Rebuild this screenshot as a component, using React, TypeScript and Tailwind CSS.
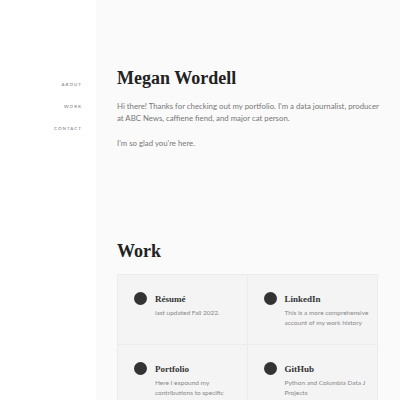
export default function App() {
  const cards = [
    { t: "Résumé", d: "last updated Fall 2022." },
    { t: "LinkedIn", d: "This is a more comprehensive account of my work history" },
    { t: "Portfolio", d: "Here I expound my contributions to specific projects" },
    { t: "GitHub", d: "Python and Columbia Data J Projects" },
  ];
  const serif = { fontFamily: '"Liberation Serif", "DejaVu Serif", serif' };
  return (
    <div className="flex min-h-[400px] w-[400px] overflow-hidden" style={{ fontFamily: 'Lato, "Noto Sans", sans-serif' }}>
      <aside className="w-[96px] shrink-0 bg-white pt-[82px] pr-[14px] flex flex-col items-end gap-[16px]">
        {["ABOUT", "WORK", "CONTACT"].map((n) => (
          <span key={n} className="text-[4.5px] leading-[6px] tracking-[1px] text-[#777]">{n}</span>
        ))}
      </aside>
      <main className="flex-1 bg-[#fafafa] pl-[21px] pr-[22px] pt-[66px]">
        <h1 className="text-[18px] leading-[24px] font-bold text-[#222]" style={serif}>Megan Wordell</h1>
        <p className="mt-[10px] mr-[-2px] text-[7.8px] leading-[12px] text-[#777]">
          Hi there! Thanks for checking out my portfolio. I'm a data journalist, producer at ABC News, caffiene fiend, and major cat person.
        </p>
        <p className="mt-[13px] text-[7.8px] leading-[12px] text-[#777]">I'm so glad you're here.</p>
        <h2 className="mt-[90px] text-[18px] leading-[24px] font-bold text-[#222]" style={serif}>Work</h2>
        <div className="mt-[11px] grid grid-cols-2 border border-[#ececec] bg-[#f4f4f4]">
          {cards.map((c, i) => (
            <div key={c.t} className={`flex gap-[8px] pl-[16px] pr-[6px] pt-[17px] h-[70px] ${i % 2 === 0 ? "border-r border-[#ececec]" : ""} ${i < 2 ? "border-b border-[#ececec]" : ""}`}>
              <div className="w-[13px] h-[13px] rounded-full bg-[#333] shrink-0" />
              <div className="pt-[1px]">
                <div className="text-[9px] leading-[12px] font-bold text-[#333]" style={serif}>{c.t}</div>
                <div className="mt-[3px] text-[6.5px] leading-[9.5px] text-[#888]">{c.d}</div>
              </div>
            </div>
          ))}
        </div>
      </main>
    </div>
  );
}
